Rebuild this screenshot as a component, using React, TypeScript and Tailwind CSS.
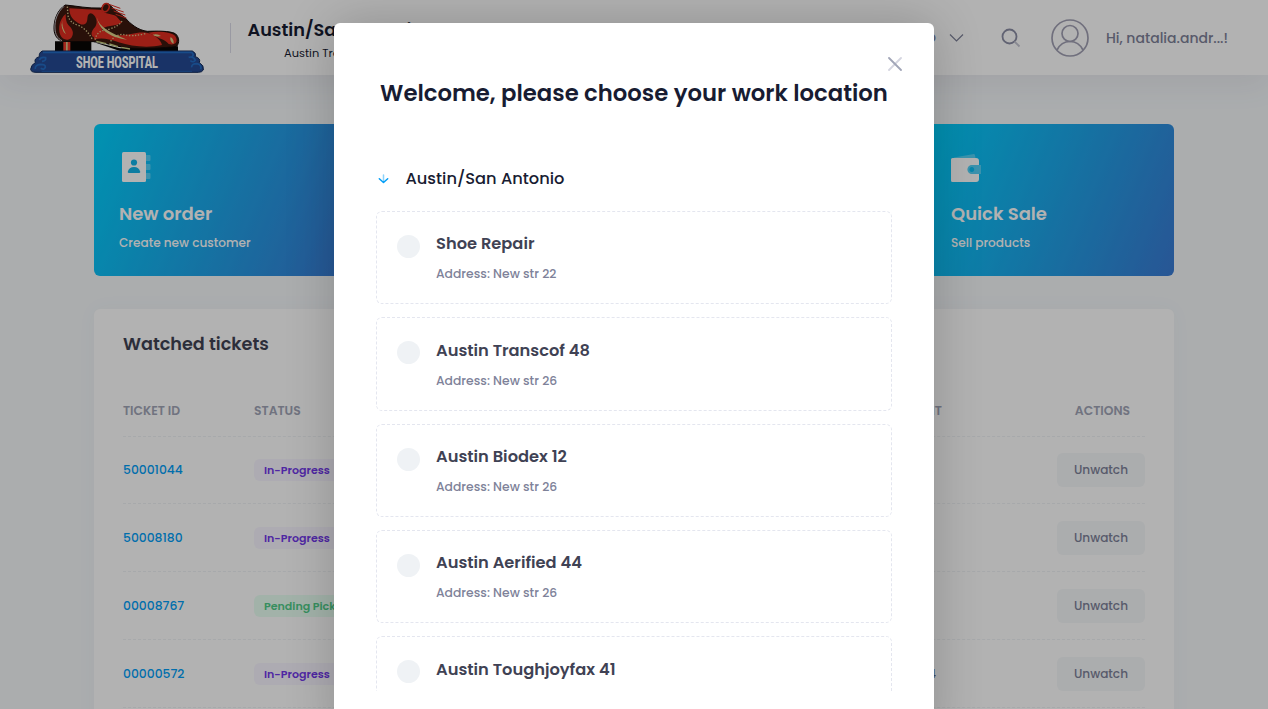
import React from "react";

const tickets = [
  { id: "50001044", status: "In-Progress", tone: "violet", count: "4", end: "pr-[8px]" },
  { id: "50008180", status: "In-Progress", tone: "violet", count: "4", end: "pr-[8px]" },
  { id: "00008767", status: "Pending Pickup", tone: "green", count: "", end: "pr-[8px]" },
  { id: "00000572", status: "In-Progress", tone: "violet", count: "4", end: "pr-[6px]" },
];

const locations = [
  { name: "Shoe Repair", address: "Address: New str 22" },
  { name: "Austin Transcof 48", address: "Address: New str 26" },
  { name: "Austin Biodex 12", address: "Address: New str 26" },
  { name: "Austin Aerified 44", address: "Address: New str 26" },
  { name: "Austin Toughjoyfax 41", address: "" },
];

function Logo() {
  return (
    <svg className="h-[75px] w-[200px] shrink-0" viewBox="0 0 600 225">
      <path d="M105 124H214V153H105Z" fill="#080605" />
      <path d="M130 125H151V153H130Z" fill="#e83a2c" />
      <path d="M138 125H143V153H138Z" fill="#d5c58a" />
      <path d="M214 124L300 145L474 139V153H300Z" fill="#080605" />
      <path d="M136 15C113 29 101 58 102 88C103 106 112 119 128 124L226 125C260 128 285 139 318 143C370 148 430 144 470 139C479 128 478 111 466 101C448 92 410 93 382 94C355 91 331 72 315 53L286 31L266 12L242 24C207 26 170 18 136 15Z" fill="#3c180e" stroke="#120806" strokeWidth="3" />
      <path d="M132 19C111 38 103 62 105 87C106 103 113 116 126 122" fill="none" stroke="#b9bac0" strokeWidth="3" />
      <path d="M137 42C119 57 113 85 121 105C127 119 143 124 154 113C164 99 157 86 145 75C138 67 137 54 137 42Z" fill="#e02d20" />
      <path d="M148 25C183 27 217 29 245 30C253 43 277 41 288 48L306 68C283 80 256 75 240 90C228 100 224 108 220 112C211 104 214 92 226 80C236 66 226 42 212 40C198 42 206 60 198 70C190 78 178 72 170 66C156 58 148 44 148 25Z" fill="#e02d20" />
      <path d="M231 72C242 89 264 102 290 106C329 107 340 96 379 98C399 101 424 118 426 135C383 145 334 139 296 127C262 115 242 113 222 119C220 102 223 87 231 72Z" fill="#e02d20" />
      <path d="M386 98C417 92 459 97 467 110C475 125 466 137 446 132C435 116 408 114 386 98Z" fill="#e02d20" />
      <ellipse cx="257" cy="23" rx="10" ry="13" transform="rotate(28 257 23)" fill="#3c180e" stroke="#e02d20" strokeWidth="5" />
      <path d="M270 14L301 25M275 24L311 36M281 33L316 45M287 43L319 54" stroke="#e02d20" strokeWidth="3" />
      <path d="M142 20L144 47Q149 69 178 77Q204 91 217 119M226 119Q229 91 266 88Q297 79 307 62M272 124Q284 104 309 103Q335 112 379 100" fill="none" stroke="#d5c58a" strokeWidth="4" strokeDasharray="4 5" />
      <path d="M127 61Q120 89 138 103Q124 78 127 61ZM230 52C238 82 269 98 321 119C276 113 239 95 230 52ZM398 104Q412 100 423 108Q407 112 398 104ZM452 111Q464 120 460 132Q447 122 452 111Z" fill="#dad18a" />
      <path d="M229 124L259 131M268 132L294 140M304 142L330 147" stroke="#cbd083" strokeWidth="4" />
      <path d="M67 153H517Q530 159 526 170Q543 175 538 188Q553 196 550 210Q546 217 535 217H48Q33 217 32 208Q33 194 46 188Q41 175 58 170Q56 158 67 153Z" fill="#254a94" stroke="#102958" strokeWidth="3" />
      <path d="M69 157H514Q524 163 516 171M58 180Q63 169 77 173Q79 183 66 184M46 207Q44 195 61 193Q77 193 76 202Q73 211 62 205M506 172Q521 168 526 181Q520 189 511 182M515 202Q514 191 530 191Q546 193 542 208" fill="none" stroke="#236cc4" strokeWidth="5" />
      <path d="M65 214H516" stroke="#236cc4" strokeWidth="2" />
      <text x="168" y="204" textLength="246" lengthAdjust="spacingAndGlyphs" className="font-['Roboto'] text-[52px] font-extrabold" fill="#ffffff">SHOE HOSPITAL</text>
    </svg>
  );
}

function Header() {
  return (
    <header className="flex h-[75px] items-center bg-white pl-5 shadow-[0_10px_30px_rgba(82,63,105,0.08)]">
      <Logo />
      <div className="ml-[10px] h-[30px] w-px bg-[#dcdce8]" />
      <div className="ml-[16.5px] w-[178px] pt-[4px] text-center">
        <div className="whitespace-nowrap text-left text-[17.7px] font-semibold leading-6 text-[#181c32]">Austin/San Antonio</div>
        <div className="mt-[2px] text-[11.4px] leading-[18px] text-[#181c32]">Austin Transcof 48</div>
      </div>
      <div className="ml-[416.5px] flex w-[94px] items-center justify-end text-[#7e8299]">
        <span className="text-[14px] font-medium">Shop</span>
      </div>
      <svg className="ml-[13px] h-[10px] w-[15px]" viewBox="0 0 15 10" fill="none" stroke="#7e8299" strokeWidth="1.2"><path d="M1 1.5L7.5 8L14 1.5" /></svg>
      <svg className="ml-[37px] size-5" viewBox="0 0 20 20" fill="none" strokeWidth="1.8">
        <circle cx="8.5" cy="8.5" r="7" stroke="#8c8ea5" /><path d="M13.5 13.5L18.5 18.5" stroke="#c3c4d1" />
      </svg>
      <svg className="ml-[30px] size-[38px]" viewBox="0 0 38 38" fill="none" stroke="#a1a0b3" strokeWidth="1.7">
        <circle cx="19" cy="19" r="18" /><circle cx="19" cy="14.5" r="8" /><path d="M6 31C9 25 14 22.5 19 22.5S29 25 32 31" />
      </svg>
      <span className="ml-[17px] whitespace-nowrap pt-px text-[14px] font-medium text-[#7e8299]">Hi, natalia.andr...!</span>
    </header>
  );
}

function ActionCard({ title, note, icon, shift }: { title: string; note: string; icon: React.ReactNode; shift: string }) {
  return (
    <div className={`flex h-[152px] flex-col rounded-[6px] bg-[linear-gradient(112.14deg,#00d2ff_0%,#3a7bd5_100%)] pl-[25px] pt-[25px] text-white ${shift}`}>
      {icon}
      <div className="mt-[15px] text-[18px] font-semibold leading-7">{title}</div>
      <div className="mt-[5px] text-[12.1px] font-medium leading-5">{note}</div>
    </div>
  );
}

function Tickets() {
  return (
    <section className="mt-[33px] h-[430px] rounded-[6px] bg-white px-[29px] shadow-[0_0_20px_rgba(76,87,125,0.04)]">
      <h2 className="pt-[21px] text-[17.6px] font-semibold leading-7 text-[#3f4254]">Watched tickets</h2>
      <div className="mt-[27px] flex h-[51.6px] items-center border-b border-dashed border-[#eff2f5] pt-[1.4px] text-[12.35px] font-semibold text-[#a1a5b7]">
        <div className="w-[131px]">TICKET ID</div>
        <div className="w-[560px]">STATUS</div>
        <div className="w-[128px] text-right">AMOUNT</div>
        <div className="ml-auto pr-[15px]">ACTIONS</div>
      </div>
      {tickets.map((t) => (
        <div key={t.id} className="flex h-[67.9px] items-center border-b border-dashed border-[#eff2f5] pt-[0.6px] text-[12.35px] font-medium">
          <div className="w-[131px] text-[#009ef7]">{t.id}</div>
          <div className="w-[560px]">
            <span className={`inline-flex h-[22px] items-center rounded-[6px] px-[10px] text-[11.05px] font-semibold ${t.tone === "green" ? "bg-[#e8fff3] text-[#50cd89]" : "bg-[#f8f5ff] text-[#7239ea]"}`}>{t.status}</span>
          </div>
          <div className={`w-[128px] text-right text-[#5e6278] ${t.end}`}>{t.count}</div>
          <div className="ml-auto flex h-[34px] w-[88px] items-center justify-center rounded-[6px] bg-[#f5f8fa] text-[12.1px] text-[#7e8299]">Unwatch</div>
        </div>
      ))}
    </section>
  );
}

const contactIcon = (
  <svg className="h-[36px] w-[36px]" viewBox="0 0 36 36" fill="white">
    <rect x="3" y="3" width="24" height="30" rx="1.5" />
    <path opacity=".3" d="M27 6h3.5q1 0 1 1v4q0 1-1 1H27zM27 15h3.5q1 0 1 1v4q0 1-1 1H27zM27 24h3.5q1 0 1 1v4q0 1-1 1H27z" />
    <circle cx="15" cy="13.5" r="3.1" fill="#13b4e8" /><path d="M8.7 23Q10 18 15 18T21.3 23Q21.2 24 20 24H10Q8.8 24 8.7 23Z" fill="#13b4e8" />
  </svg>
);

const walletIcon = (
  <svg className="h-[36px] w-[36px]" viewBox="0 0 36 36" fill="white">
    <path opacity=".3" d="M3 8.5L23 5Q24 5 24.5 9H3Z" />
    <path d="M0 10.5Q0 9 1.5 9H25Q28 9 28 12V16H21A4.5 4.5 0 0 0 21 25H28V30Q28 33 25 33H1.5Q0 33 0 31.5Z" />
    <path opacity=".3" fillRule="evenodd" d="M21 16H30V25H21A4.5 4.5 0 0 1 21 16ZM20.8 18.1a2.4 2.4 0 1 0 .01 0Z" />
  </svg>
);

function LocationModal() {
  return (
    <div className="absolute left-[334px] top-[23px] flex h-[720px] w-[600px] flex-col rounded-[6px] bg-white px-[42px] shadow-[0_0_50px_rgba(0,0,0,0.2)]">
      <div className="flex h-[54px] items-end justify-end pb-[6.5px]">
        <svg className="mr-[-9.5px] size-[14px]" viewBox="0 0 14 14" fill="none" strokeWidth="1.8" strokeLinecap="round">
          <path d="M13 1L1 13" stroke="#d4d5e0" /><path d="M1 1L13 13" stroke="#a1a5b7" />
        </svg>
      </div>
      <h1 className="whitespace-nowrap text-center text-[22.75px] font-semibold leading-8 text-[#181c32]">Welcome, please choose your work location</h1>
      <div className="mt-[57px] flex h-6 items-center">
        <svg className="ml-[2px] mt-px h-[10px] w-[11px]" viewBox="0 0 11 10" fill="none" stroke="#009ef7" strokeWidth="1.5" strokeLinecap="round" strokeLinejoin="round">
          <path opacity=".45" d="M5.5 1V8" /><path d="M1.3 4.7L5.5 8.5L9.7 4.7" />
        </svg>
        <span className="ml-[16.5px] pt-[2.5px] text-[16.25px] font-medium text-[#181c32]">Austin/San Antonio</span>
      </div>
      <div className="mt-[21.1px] h-[479.9px] overflow-hidden">
        {locations.map((l) => (
          <div key={l.name} className="mb-[13.1px] flex h-[93.25px] rounded-[6px] border border-dashed border-[#e4e6ef] pl-5 pt-[20.2px]">
            <div className="mt-[2.8px] size-[23px] rounded-full bg-[#eff2f5]" />
            <div className="ml-4">
              <div className="text-[16.25px] font-semibold leading-6 text-[#3f4254]">{l.name}</div>
              {l.address && <div className="mt-[8px] text-[12.35px] font-medium leading-5 text-[#7e8299]">{l.address}</div>}
            </div>
          </div>
        ))}
      </div>
    </div>
  );
}

export default function App() {
  return (
    <div className="relative h-[709px] w-[1268px] overflow-hidden bg-[#f5f8fa] font-['Poppins','Inter',sans-serif]">
      <Header />
      <main className="mx-auto w-[1080px] pt-[49px]">
        <div className="grid grid-cols-4 gap-[29.33px]">
          <ActionCard title="New order" note="Create new customer" icon={contactIcon} shift="" />
          <ActionCard title="Quick Sale" note="Sell products" icon={walletIcon} shift="col-start-4" />
        </div>
        <Tickets />
      </main>
      <div className="absolute inset-0 bg-black/30" />
      <LocationModal />
    </div>
  );
}
